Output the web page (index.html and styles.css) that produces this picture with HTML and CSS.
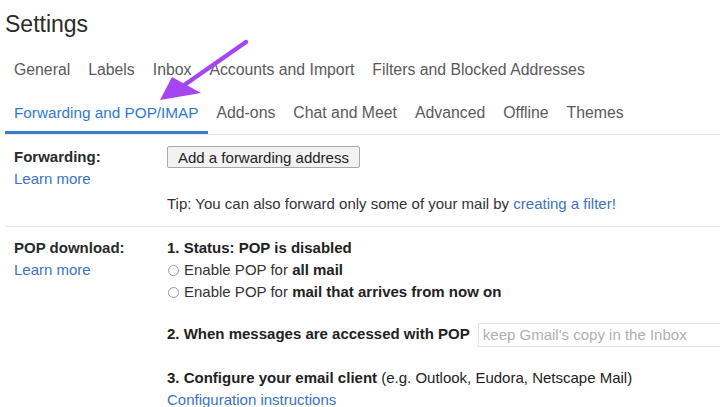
FILE: index.html
```html
<!DOCTYPE html>
<html lang="en">

<head>
     <meta charset="UTF-8">
     <meta name="viewport" content="width=device-width, initial-scale=1.0">
     <title>Settings</title>
     <link rel="stylesheet" href="styles.css">
</head>

<body>
     <div class="page">
          <h1 class="page_title">Settings</h1>

          <nav class="tabs">
               <div class="tab_row">
                    <a class="tab">General</a>
                    <a class="tab">Labels</a>
                    <a class="tab">Inbox</a>
                    <a class="tab">Accounts and Import</a>
                    <a class="tab">Filters and Blocked Addresses</a>
               </div>
               <div class="tab_row">
                    <a class="tab tab_active">Forwarding and POP/IMAP</a>
                    <a class="tab">Add-ons</a>
                    <a class="tab">Chat and Meet</a>
                    <a class="tab">Advanced</a>
                    <a class="tab">Offline</a>
                    <a class="tab">Themes</a>
               </div>
          </nav>

          <!-- Forwarding -->
          <section class="setting_row setting_forward">
               <div class="setting_label">
                    <b>Forwarding:</b>
                    <a class="link">Learn more</a>
               </div>
               <div class="setting_body">
                    <div class="line"><button class="btn">Add a forwarding address</button></div>
                    <div class="line tip">Tip: You can also forward only some of your mail by <a class="link">creating a filter!</a></div>
               </div>
          </section>

          <!-- POP -->
          <section class="setting_row setting_pop">
               <div class="setting_label">
                    <b>POP download:</b>
                    <a class="link">Learn more</a>
               </div>
               <div class="setting_body">
                    <div class="line"><b>1. Status: POP is disabled</b></div>
                    <label class="line radio"><span class="radio_dot"></span>Enable POP for <b>all mail</b></label>
                    <label class="line radio"><span class="radio_dot"></span>Enable POP for <b>mail that arrives from now on</b></label>

                    <div class="line step">
                         <b>2. When messages are accessed with POP</b>
                         <span class="select">keep Gmail's copy in the Inbox</span>
                    </div>

                    <div class="line step"><b>3. Configure your email client</b> (e.g. Outlook, Eudora, Netscape Mail)</div>
                    <a class="line link">Configuration instructions</a>
               </div>
          </section>
     </div>

     <!-- annotation arrow -->
     <svg class="arrow" width="720" height="407" viewBox="0 0 720 407">
          <line x1="246" y1="42" x2="180" y2="88" stroke="#a546f2" stroke-width="4.5" stroke-linecap="round" />
          <polygon points="160,100 172,77 201,93" fill="#a546f2" />
     </svg>
</body>

</html>
```

FILE: styles.css
```css
html,
body {
     margin: 0;
     padding: 0;
     background: #fff;
     overflow: hidden;
}

body {
     width: 720px;
     height: 407px;
     font-family: "Liberation Sans", Arial, sans-serif;
     font-size: 15px;
     color: #222;
     position: relative;
}

.page_title {
     margin: 0;
     padding: 10px 0 0 5px;
     font-size: 23px;
     font-weight: 400;
     line-height: 28px;
     color: #2b2b2b;
}

.tabs {
     margin: 0 0 0 5px;
     border-bottom: 1px solid #e8e8e8;
}

.tab_row {
     display: flex;
     height: 43px;
     align-items: center;
}

.tab_row:first-child {
     margin-top: 11px;
     height: 42px;
}

.tab {
     padding: 0 9px;
     font-size: 15.8px;
     color: #5a5a5a;
     white-space: nowrap;
     line-height: 20px;
}

.tab_active {
     font-size: 15.3px;
     color: #2f7ad1;
     align-self: stretch;
     display: flex;
     align-items: center;
     box-shadow: inset 0 -3px 0 #3b7dcc;
}

.setting_row {
     display: grid;
     grid-template-columns: 153px 1fr;
     margin: 0 0 0 5px;
     padding-left: 9px;
     border-bottom: 1px solid #e6e6e6;
     line-height: 22px;
}

.setting_forward {
     padding-top: 11px;
     padding-bottom: 11px;
}

.setting_pop {
     padding-top: 10px;
     border-bottom: none;
}

.setting_label {
     display: flex;
     flex-direction: column;
     align-items: flex-start;
}

.setting_label b {
     font-weight: 700;
     color: #2a2a2a;
}

.setting_body {
     display: flex;
     flex-direction: column;
     align-items: flex-start;
}

.line {
     display: block;
     height: 22px;
     line-height: 22px;
     white-space: nowrap;
}

.link {
     color: #3c72c6;
}

.btn {
     font-family: inherit;
     font-size: 15px;
     color: #222;
     height: 22px;
     padding: 0 10px;
     background: #f2f2f2;
     border: 1px solid #a9a9a9;
     border-radius: 2px;
     vertical-align: top;
}

.tip {
     margin-top: 25px;
     color: #333;
}

.radio {
     color: #333;
}

.radio b {
     color: #222;
}

.radio_dot {
     display: inline-block;
     width: 9px;
     height: 9px;
     border: 1px solid #9a9a9a;
     border-radius: 50%;
     margin: 0 5px 0 1px;
     vertical-align: -1px;
}

.step {
     margin-top: 20px;
}

.step + .step {
     margin-top: 22px;
}

.select {
     display: inline-block;
     margin-left: 4px;
     width: 260px;
     height: 22px;
     line-height: 22px;
     padding-left: 4px;
     border: 1px solid #e2e2e2;
     color: #b0b0b0;
     vertical-align: top;
}

.arrow {
     position: absolute;
     left: 0;
     top: 0;
     pointer-events: none;
}
```
